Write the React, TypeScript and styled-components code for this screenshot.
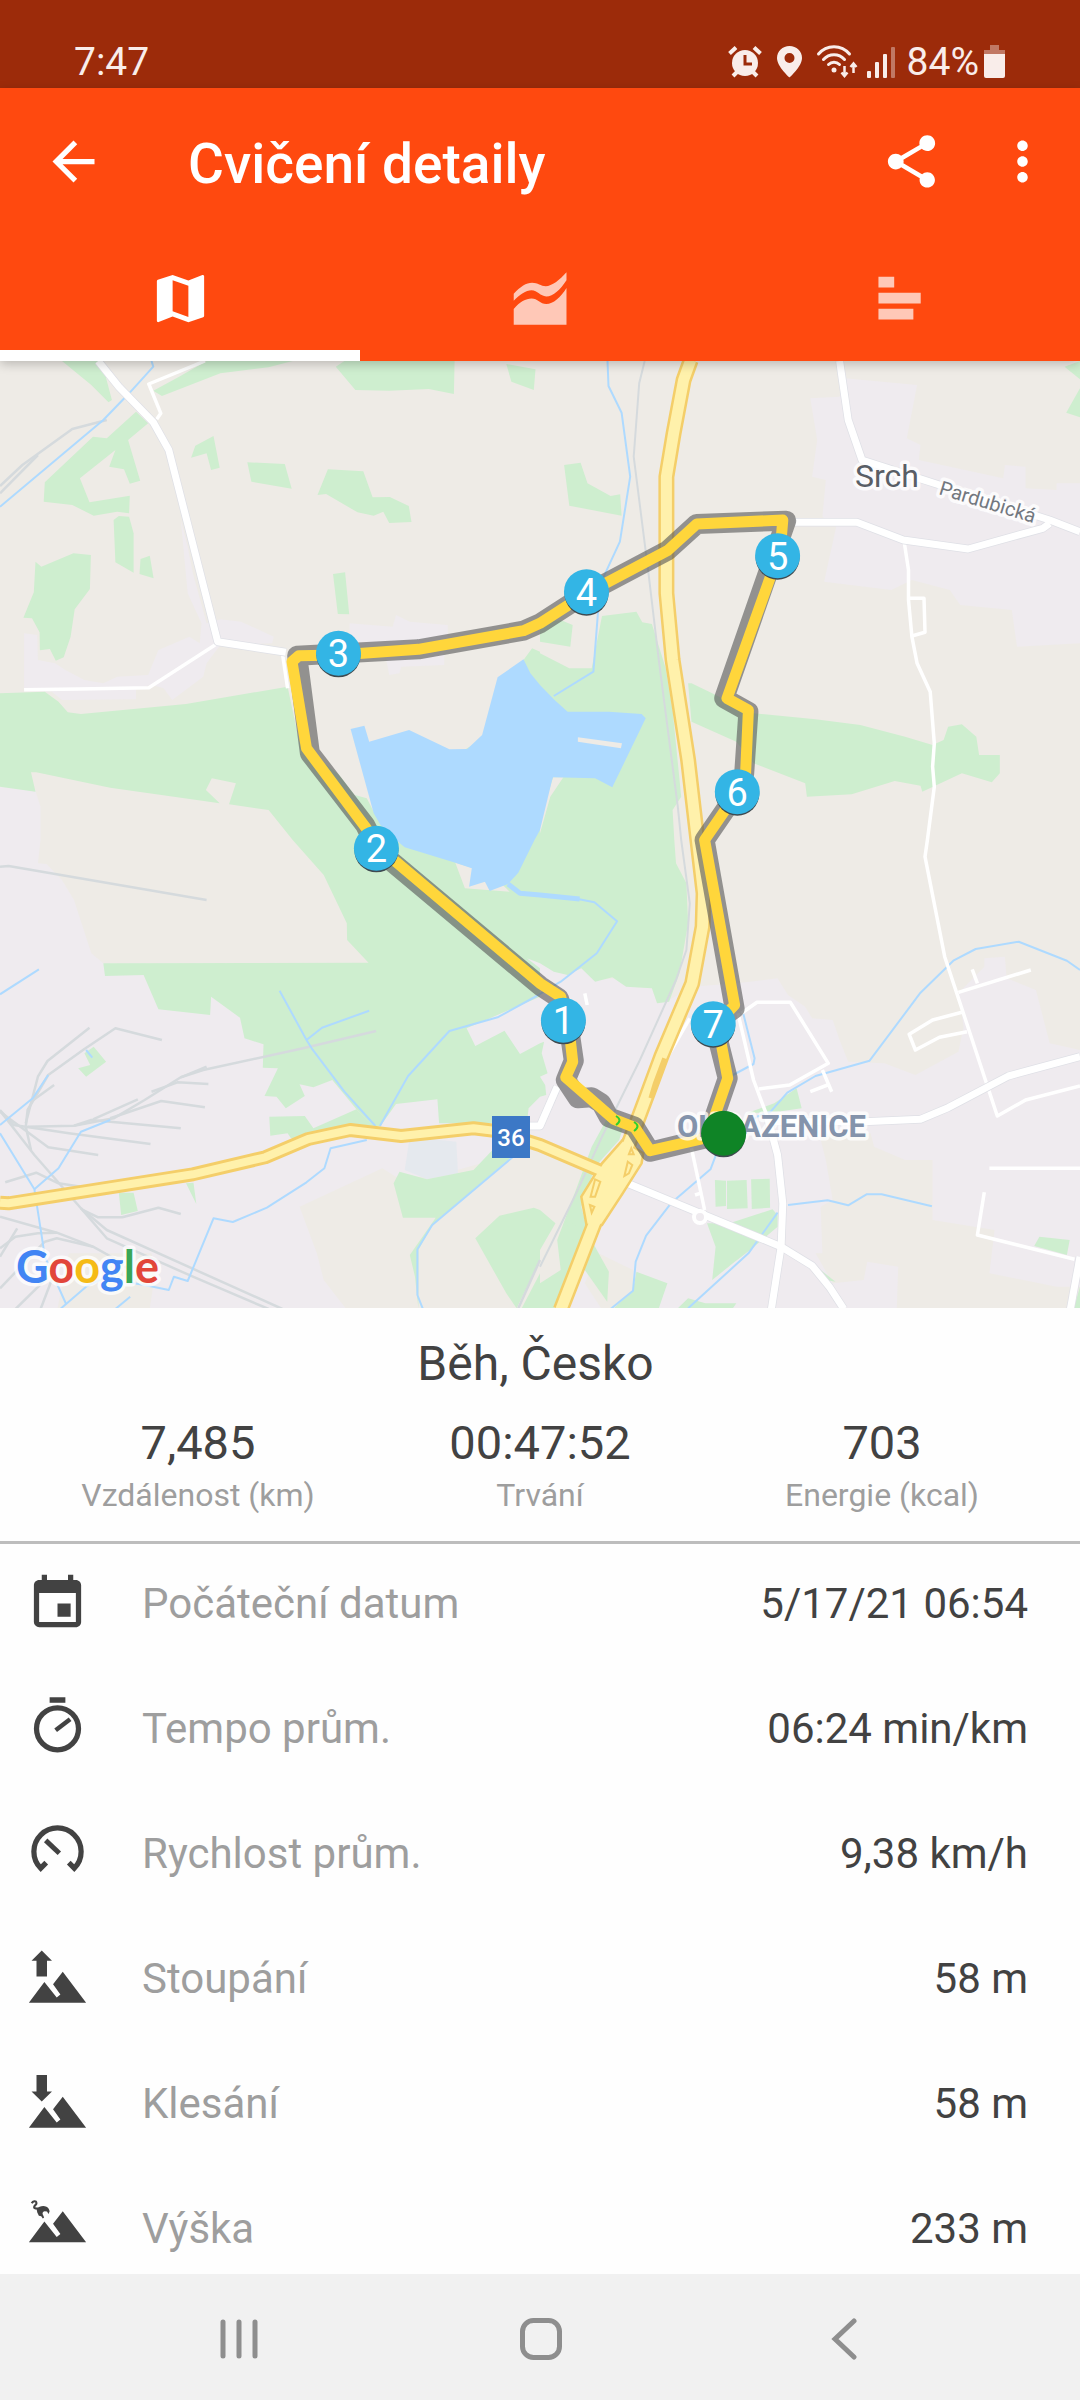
import React from 'react';
import styled, { createGlobalStyle } from 'styled-components';
import { MdArrowBack, MdEvent, MdMap, MdMoreVert, MdShare } from 'react-icons/md';

const GlobalStyle = createGlobalStyle`
  * { box-sizing: border-box; }
  body {
    margin: 0;
    background: #fefefe;
    color: #424242;
    font-family: Roboto, "Noto Sans", sans-serif;
  }
  button {
    margin: 0;
    padding: 0;
    border: 0;
    background: none;
    color: inherit;
    font: inherit;
    cursor: pointer;
  }
  svg { display: block; flex: none; }
`;

/* ---------- layout parts ---------- */

const Screen = styled.div`
  display: flex;
  flex-direction: column;
  height: 100vh;
  overflow: hidden;
`;

const StatusBar = styled.div`
  display: flex;
  flex: none;
  align-items: center;
  justify-content: space-between;
  height: 88px;
  padding: 35px 70px 0 74px;
  background: #9c2b0a;
  color: #f9edea;
  font-size: 39px;
  line-height: 44px;
`;

const StatusIcons = styled.div`
  display: flex;
  align-items: center;
`;

const Header = styled.header`
  position: relative;
  z-index: 1;
  flex: none;
  background: #ff490f;
  color: #fff;
  box-shadow: 0 3px 10px rgba(0, 0, 0, 0.22);
`;

const Toolbar = styled.div`
  display: flex;
  align-items: center;
  height: 147px;
  padding: 0 26px 0 42px;
`;

const Title = styled.h1`
  flex: 1;
  margin: 0 0 0 83px;
  padding-top: 4px;
  font-size: 55px;
  font-weight: 500;
  line-height: 64px;
`;

const ToolbarActions = styled.div`
  display: flex;
  gap: 48px;
`;

const Tabs = styled.nav`
  display: grid;
  grid-template-columns: repeat(3, 1fr);
`;

const Tab = styled.button<{ $active?: boolean }>`
  display: flex;
  align-items: center;
  justify-content: center;
  height: 126px;
  color: ${(p) => (p.$active ? '#fff' : 'rgba(255, 255, 255, 0.7)')};
  box-shadow: ${(p) => (p.$active ? 'inset 0 -11px #fff' : 'none')};
`;

const MapView = styled.svg`
  width: 100%;
  height: auto;
  background: #eeebe6;
`;

const Summary = styled.section`
  flex: none;
  padding: 24px 27px 26px;
  border-bottom: 3px solid #bdbdbd;
`;

const SummaryTitle = styled.h2`
  margin: 0 0 19px;
  padding-right: 9px;
  font-size: 48px;
  font-weight: 400;
  line-height: 64px;
  text-align: center;
`;

const Stats = styled.dl`
  display: grid;
  grid-template-columns: repeat(3, 1fr);
  margin: 0;
  text-align: center;
`;

const Stat = styled.div`
  display: flex;
  flex-direction: column-reverse;
  gap: 4px;
`;

const StatValue = styled.dd`
  margin: 0;
  font-size: 47px;
  line-height: 56px;
`;

const StatLabel = styled.dt`
  color: #9e9e9e;
  font-size: 32px;
  line-height: 40px;
`;

const Details = styled.dl`
  flex: 1;
  min-height: 0;
  margin: 0;
  overflow-y: auto;
  scrollbar-width: none;
`;

const Row = styled.div`
  display: flex;
  align-items: center;
  height: 125px;
  padding: 0 52px 6px 26px;
  font-size: 42px;
  line-height: 50px;
`;

const RowLabel = styled.dt`
  flex: 1;
  margin-left: 53px;
  color: #9e9e9e;
`;

const RowValue = styled.dd`
  margin: 0;
`;

const SystemNav = styled.nav`
  display: flex;
  flex: none;
  justify-content: center;
  height: 126px;
  padding: 4px 0 0 2px;
  background: #f1f1f1;
  color: #8e8e8e;
`;

const NavButton = styled.button`
  display: flex;
  flex: 0 1 302px;
  align-items: center;
  justify-content: center;
`;

/* ---------- icons ---------- */

const AlarmIcon = () => (
  <svg width="48" height="34" fill="none" stroke="currentColor">
    <circle cx="20" cy="18" r="13" fill="currentColor" stroke="none" />
    <path d="M4.500 8.500 11 2.500M29 2.500l6.500 6" strokeWidth="4" />
    <path d="M12 27l-4 4M28 27l4 4" strokeWidth="4" />
    <path d="M20 10v9h7" stroke="#9c2b0a" strokeWidth="3" />
  </svg>
);

const PinIcon = () => (
  <svg width="40" height="34" fill="currentColor">
    <path
      fillRule="evenodd"
      d="M16.500 1C9.500 1 4 6.300 4 13c0 8.500 12.500 19.500 12.500 19.500S29 21.500 29 13C29 6.300 23.500 1 16.500 1zm0 7a5 5 0 1 1 0 10 5 5 0 0 1 0-10z"
    />
  </svg>
);

const WifiIcon = () => (
  <svg width="50" height="34" fill="none" stroke="currentColor" strokeWidth="3" strokeLinecap="round">
    <path d="M5.500 9a20 20 0 0 1 31 0M10.500 14.500a14 14 0 0 1 21 0M15.500 19.500a8 8 0 0 1 11 0" />
    <circle cx="21" cy="25" r="2.500" fill="currentColor" stroke="none" />
    <path d="M31.500 21v9M28.500 27.500l3 3.500 3-3.500M40.500 28v-9M37.500 22l3-3.500 3 3.500" strokeWidth="2.500" strokeLinecap="butt" />
  </svg>
);

const SignalIcon = () => (
  <svg width="44" height="34" fill="currentColor">
    <rect x="4" y="26" width="4" height="7" rx="1" />
    <rect x="12" y="17" width="4" height="16" rx="1" />
    <rect x="20" y="9" width="4" height="24" rx="1" />
    <rect x="28" y="2" width="4" height="31" rx="1" opacity="0.4" />
  </svg>
);

const BatteryIcon = () => (
  <svg width="31" height="34" fill="currentColor">
    <path d="M11 0h9v5h6v4H5V5h6z" opacity="0.4" />
    <path d="M5 9h21v22a2 2 0 0 1-2 2H7a2 2 0 0 1-2-2z" />
  </svg>
);

const Glyph = ({ children }: { children: React.ReactNode }) => (
  <svg width="63" height="63" viewBox="0 0 24 24" fill="currentColor" aria-hidden="true">
    {children}
  </svg>
);

const ChartIcon = () => (
  <Glyph>
    <path d="M1.800 10.200C4.300 7.500 6.600 6 8.800 6c2.200 0 3.300 1.300 5.200 1.300C16.300 7.300 19.300 5 21.900 2v3c-2.300 3.500-5 6.200-7.700 6.200-2.300 0-3.300-2.300-5.600-2.300-2.200 0-4.500 1.600-6.800 4z" />
    <path d="M1.800 16c2.300-2.700 4.600-4 6.800-4 2.300 0 3.300 2.100 5.600 2.100 2.700 0 5.400-2.500 7.700-6.100v14H1.800z" />
  </Glyph>
);

const BarsIcon = () => (
  <Glyph>
    <path d="M3.600 3.700h6v4.100h-6zM3.600 9.800h16.100v4.100H3.600zM3.600 15.900h13.300V20H3.600z" />
  </Glyph>
);

const StopwatchIcon = () => (
  <Glyph>
    <path d="M9 .1h6v2.100H9z" />
    <g fill="none" stroke="currentColor">
      <circle cx="12" cy="12.100" r="8" strokeWidth="2" />
      <path d="M11.300 12.700l5.500-4.200" strokeWidth="1.700" />
    </g>
  </Glyph>
);

const SpeedIcon = () => (
  <Glyph>
    <g fill="none" stroke="currentColor" strokeWidth="2">
      <path d="M7.700 15.500l-2.100 2.100a9 9 0 1 1 12.800 0l-2.100-2.100" />
      <path d="M7.500 7l5.200 4.900" strokeWidth="1.900" />
    </g>
  </Glyph>
);

const MOUNTAINS = 'M14 9.400l8.900 11.800H1.100L7 13.300l4.700 5.900 1.400-1.100-2.800-3.900z';

const AscentIcon = () => (
  <Glyph>
    <path d="M6 1.300l3.900 3.900H8v6H4v-6H2.100z" />
    <path d={MOUNTAINS} />
  </Glyph>
);

const DescentIcon = () => (
  <Glyph>
    <path d="M4 1.100h4v6.300h1.900L6 11.200 2.100 7.400H4z" />
    <path d={MOUNTAINS} />
  </Glyph>
);

const AltitudeIcon = () => (
  <Glyph>
    <path d="M2.200 2.400c.4-.9 1.600-1.100 1.800-.2.200.8-1.100 1-.9 1.800.1.500 1 .3 1.700.4" fill="none" stroke="currentColor" strokeWidth=".8" />
    <path d="M4 4.500c1-1 2.600-1.400 3.800-.8.700.3 1 1 1.200 1.700l-.4 1.100-.6-1-.9-.1c-.8.200-1 .9-.6 1.500l.4.900-.5.400-.6-.9-.9-.2-.6-1.200z" />
    <path d={MOUNTAINS} transform="translate(0 -4)" />
  </Glyph>
);

const RecentsIcon = () => (
  <svg width="42" height="42" stroke="currentColor" strokeWidth="5" strokeLinecap="round">
    <path d="M5 4v34M21 4v34M37 4v34" />
  </svg>
);

const HomeIcon = () => (
  <svg width="42" height="42" fill="none" stroke="currentColor" strokeWidth="5">
    <rect x="2.500" y="2.500" width="37" height="37" rx="11" />
  </svg>
);

const BackIcon = () => (
  <svg width="42" height="42" fill="none" stroke="currentColor" strokeWidth="5" strokeLinecap="round">
    <path d="M32 3 13 21l19 18" />
  </svg>
);

/* ---------- map ---------- */

// Map shapes are kept per quadrant, in fine quadrant units; a quadrant name in a
// point list switches the quadrant for the points after it.
const QUADRANTS: Record<string, [number, number]> = {
  nw: [0, -1],
  ne: [540, -1],
  sw: [0, 479],
  se: [540, 479],
};
const UNIT_X = 540 / 1568;
const UNIT_Y = 1 / 3;

const locate = (quadrant: string, x: number, y: number): [number, number] => {
  const [left, top] = QUADRANTS[quadrant];
  return [Math.round((left + x * UNIT_X) * 10) / 10, Math.round((top + y * UNIT_Y) * 10) / 10];
};

const project = (list: string) => {
  let quadrant = 'nw';
  const out: string[] = [];
  for (const token of list.trim().split(/\s+/)) {
    if (token in QUADRANTS) {
      quadrant = token;
    } else {
      const [x, y] = token.split(',').map(Number);
      out.push(locate(quadrant, x, y).join(','));
    }
  }
  return out.join(' ');
};

const URBAN = [
  'nw 525,480 545,560 560,640 600,790 640,778 700,785 795,830 790,850 640,855 600,910 590,950 500,1020 475,985 440,975 395,985 395,1018 180,1020 150,995 70,990 70,820 108,825 110,900 160,910 190,930 245,960 300,970 340,950 430,945 460,870 550,830 580,850 585,790 545,700',
  'nw 1015,790 1140,800 1150,765 1190,785 1300,795 1300,840 1215,850 1015,860',
  'nw 1120,890 1215,900 1290,880 1290,915 1165,920 1160,940 1130,945',
  'nw 0,1270 102,1290 118,1340 118,1440 sw 110,70 135,72 180,120 215,180 265,340 300,370 1070,370 1568,355 1568,1440 0,1440',
  'se 0,365 120,385 160,420 220,415 260,440 325,445 340,490 375,480 440,440 570,430 690,415 720,465 770,500 790,535 850,540 870,600 895,665 1000,670 1090,705 1215,635 1230,560 1215,460 1290,380 1290,355 1350,350 1355,415 1440,450 1480,610 1568,630 1568,1440 0,1440',
  'ne 785,115 870,110 885,55 1095,75 1065,235 1105,255 1100,300 1345,355 1350,315 1410,320 1410,385 1500,390 1500,370 1568,370 1568,850 1385,860 1370,750 1220,735 1190,690 1080,660 1020,690 825,665 860,500 820,470 830,360 790,350 805,240',
];

const FIELDS = [
  'sw 870,1100 1110,985 1150,1010 1260,1010 1430,960 1568,890 se 0,935 170,995 100,1150 80,1250 0,1440 sw 1030,1440 940,1320 920,1240',
  'sw 200,1240 440,1240 450,1300 430,1440 160,1440',
  'se 810,880 960,880 970,920 1060,960 1140,960 1140,1140 1320,1170 1305,1300 1500,1340 1568,1340 1568,1440 1035,1440 1040,1280 950,1265 940,1320 850,1330 800,1240 820,1240 815,1100 850,1080 830,960',
  'se 170,1240 270,1290 270,1350 200,1440 130,1330',
];

const WOODS = [
  'nw 180,3 295,3 325,120 315,127 265,75',
  'nw 445,92 520,50 600,3 850,3 780,22 640,40 470,108',
  'nw 975,20 1000,3 1320,3 1318,102 1245,87 1130,92 1032,90',
  'nw 1470,12 1555,28 1550,90 1485,65',
  'nw 395,155 430,190 372,240 407,362 377,371 360,328 317,320 335,270 232,355 260,427 377,407 375,460 340,455 272,467 210,435 127,425 130,367 270,230 310,235',
  'nw 345,468 375,470 388,520 388,638 335,607 330,480',
  'nw 408,597 435,587 446,655 405,642',
  'nw 103,605 120,620 213,580 264,585 261,687 217,748 205,830 185,892 162,902 145,867 116,871 115,817 93,775 68,773 98,697',
  'nw 620,228 638,323 613,330 600,280 555,293 567,257',
  'nw 718,307 827,312 847,386 730,365',
  'nw 952,328 1055,334 1082,412 1132,411 1187,438 1195,486 1130,489 1113,455 1085,467 1038,457 947,402 922,405',
  'nw 967,642 1002,637 1014,763 981,762',
  'nw 0,1000 130,995 170,1025 197,1057 235,1062 540,1032 835,980 870,1150 985,1245 1030,1305 1065,1315 1090,1365 1300,1200 1420,1125 1465,950 1520,900 1545,865 1568,875 ne 0,880 85,925 150,925 180,768 280,755 297,787 325,792 365,925 385,1050 410,1310 385,1350 390,1440 se 395,70 425,130 430,250 405,400 375,485 340,490 325,445 250,440 210,412 160,425 120,385 80,405 40,395 0,370 sw 1530,355 1568,385 1568,470 1355,565 1380,618 1465,572 1510,642 1568,610 se 12,605 5,640 22,700 0,710 15,735 18,765 sw 1568,770 1535,805 1530,850 1430,850 1275,850 1270,778 1150,792 1105,858 1085,858 1035,808 965,720 910,742 870,733 885,768 830,805 803,770 768,768 807,685 763,683 765,613 710,595 697,533 613,470 610,525 460,508 417,405 305,408 300,370 1070,368 1008,300 1007,250 940,105 850,0 nw 780,1350 665,1333 685,1270 615,1255 598,1290 638,1330 320,1283 105,1237 90,1237 103,1295 0,1280',
  'sw 1035,808 1085,858 1010,860 900,895 845,895 835,880 785,887 782,830 885,828 910,865',
  'ne 70,315 118,308 138,370 205,408 233,403 237,467 85,437',
  'ne 0,790 60,780 95,795 88,860 0,845',
  'ne 1523,20 1568,3 1568,58',
  'ne 1568,85 1568,172 1528,158',
  'ne 430,970 440,970 620,1060 800,1078 930,1095 1060,1130 1140,1155 1172,1140 1185,1100 1225,1093 1267,1130 1275,1185 1335,1185 1335,1240 1312,1267 1225,1240 1110,1295 1105,1277 1030,1263 905,1303 775,1310 770,1270 620,1210 570,1145 440,1085',
  'se 150,920 195,835 245,850 230,900 160,980 120,1100 135,1160 75,1310 40,1405 0,1405 0,1330 60,1290 50,1200 90,1090',
  'se 75,1145 130,1165 200,1295 195,1385 130,1290',
  'se 280,1295 370,1330 345,1405 215,1405 270,1350',
  'se 508,1020 540,1022 540,1098 510,1100',
  'se 543,1022 600,1020 603,1105 543,1107',
  'se 613,1018 667,1016 668,1103 615,1107',
  'se 485,1150 550,1150 675,1108 690,1125 690,1160 610,1230 560,1270 500,1320 510,1220',
  'se 745,745 760,805 690,815 600,820 680,790',
  'se 1450,1190 1538,1200 1530,1245 1435,1218',
  'se 430,1375 480,1390 570,1390 560,1405 400,1405',
  'se 1568,1340 1568,1405 1550,1405',
  'se 815,1290 858,1325 830,1320',
  'sw 245,640 272,620 308,665 250,710 227,685 262,675',
  'sw 345,1058 388,1058 400,1113 352,1125',
  'sw 540,1030 562,1028 570,1092',
  'sw 1160,995 1240,1018 1375,990 1430,930 1485,950 1255,1155 1215,1230 1215,1405 1205,1310 1190,1245 1265,1133 1170,1133 1143,1030',
  'sw 1450,1127 1550,1103 1568,1110 se 45,1150 0,1230 sw 1568,1260 1500,1405 1470,1360 1380,1195',
  'sw 1568,1300 1568,1405 1515,1405',
];

const CLEARINGS = [
  'sw 1322,68 1375,85 1370,130 1410,125 1425,145 1460,135 1480,155 1350,145',
  'ne 38,1252 68,1252 30,1310 0,1420 0,1380',
];

const LAKE =
  'nw 1018,1107 1058,1097 1072,1145 1188,1110 1305,1168 1357,1167 1400,1125 1445,952 1520,898 1540,940 1568,975 ne 40,1018 80,1055 200,1055 295,1062 307,1075 210,1282 160,1255 38,1252 35,1260 0,1410 sw 1552,0 1505,98 1475,132 1460,138 1422,153 1408,125 1362,140 1370,85 1322,68 1175,22 1150,0 nw 1105,1395 1085,1360';
const ISLAND = 'ne 110,1132 238,1150 235,1165 110,1145';

const STREAMS = [
  'nw 440,3 445,20 375,100 300,180 0,440',
  'ne 196,3 199,78 237,158 262,350 232,545 185,650 168,760 155,935 40,1008',
  'se 0,167 110,177 158,187 224,244 165,340 60,425 40,437 sw 1558,468 1445,532 1305,573 1185,708 1103,858',
  'sw 812,452 890,600 905,625 1000,755 1090,858',
  'sw 890,600 935,563 1072,512',
  'sw 1065,900 960,925 942,985 890,1027 775,1103 676,1146 620,1135 545,1323 505,1310 490,1350 420,1335 300,1315 250,1340 175,1407',
  'sw 113,388 0,463',
  'sw 0,855 95,775 140,705',
  'sw 320,840 235,875 170,985 100,1048',
  'sw 0,880 100,1048 120,1180 130,1250 192,1392',
  'sw 378,1370 335,1407',
  'sw 250,630 268,653',
  'sw 1490,950 1255,1155 1212,1228 1212,1365 1228,1407',
  'se 590,520 623,655 620,672 560,705',
  'se 1568,390 1530,362 1390,305 1265,327 1200,362 1105,458 957,662 800,708 718,758 670,815 630,830 520,920 495,988 380,1090 308,1187 278,1265 270,1352 205,1407',
  'se 720,1095 835,1081 895,1096 948,1063 992,1063 1138,1099',
  'se 690,1118 605,1240 430,1405',
];

const RAILS = [
  'nw 310,180 210,207 65,315 0,378',
  'nw 110,285 0,400',
  'sw 0,80 25,78 600,180',
  'sw 260,563 138,663 110,710 75,850',
  'sw 470,600 335,565 245,627 140,705 80,810 75,860 90,930',
  'sw 157,735 90,785',
  'sw 1092,573 880,625 590,690 525,712 420,780 330,835 215,857 80,860',
  'sw 600,680 525,712',
  'sw 605,732 515,727 440,755',
  'sw 595,802 468,783 320,835',
  'sw 400,778 270,838',
  'sw 525,865 265,840 215,857',
  'sw 437,912 200,880 40,855 0,810',
  'sw 285,945 140,922 0,815',
  'sw 0,812 100,945 235,1105 310,1170 820,1407',
  'sw 235,1105 310,1195 560,1310 780,1407',
  'sw 15,1027 105,998 170,1030 235,1040',
  'sw 240,1110 285,1132 355,1132 460,1103 525,1122',
  'sw 0,1130 165,1178 270,1220 340,1260 400,1310',
  'sw 0,1225 45,1190 110,1180 165,1178',
  'sw 0,1250 50,1165',
  'sw 0,1345 130,1205 165,1195 270,1220',
  'sw 45,1407 160,1290',
  'sw 118,1407 150,1320',
  'sw 1505,1405 1568,1260',
];

const MAIN_RAIL =
  'ne 304,3 288,70 272,290 315,640 345,900 400,1340 410,1440 se 435,190 425,330 395,420 290,660 180,890 105,1060 0,1280';

const LANES = [
  'nw 595,3 432,72 467,160 455,178',
  'nw 70,989 230,987 432,983 632,850',
  'nw 820,880 835,985',
  'ne 1058,550 1070,630 1070,720 1080,830 1095,910 1133,995 1145,1150 1140,1220 1145,1280 1125,1440 se 1118,50 1175,350 1328,828 1410,780 1568,738',
  'ne 1070,715 1115,715 1118,817 1080,828',
  'se 1215,457 1425,390',
  'se 1255,388 1270,430',
  'se 1225,517 1140,540 1072,583 1090,630 1160,592 1240,575',
  'se 585,520 630,487 727,487 837,670 725,735 635,747',
  'se 575,520 620,720 660,830',
  'se 820,690 847,755',
  'se 835,735 785,755',
  'se 440,925 478,1110',
  'se 450,1065 465,1060',
  'se 435,535 365,660',
  'se 130,460 137,495',
  'se 1305,985 1568,985',
  'se 1290,1057 1270,1185 1552,1258',
];

const ROADS = [
  'nw 285,3 345,80 445,187 490,270 632,845 830,877',
  'ne 870,3 895,180 935,300 1100,355 1160,375 1480,480 1568,515',
  'ne 740,487 920,487 1055,540 1243,567 1460,505 1480,490',
  'sw 1530,858 1568,858 se 50,740',
  'se 680,845 940,845 1105,838 1185,803 1360,708 1568,650',
  'se 660,830 690,945 705,1090 700,1220 672,1407',
  'se 250,1028 465,1120 700,1220 790,1277 840,1340 882,1407',
  'se 1568,1250 1540,1407',
];

const ROUTE_36 =
  'sw 0,1088 25,1090 560,1003 770,952 895,897 1017,870 1165,888 1375,865 1440,873 1568,915 se 170,990 240,1020';
const MOTORWAY =
  'ne 438,0 417,60 388,220 367,350 367,700 385,900 430,1200 457,1440 se 475,160 472,260 442,430 352,650 309,770 262,900 200,1060 158,1150 60,1410';
const INTERCHANGE = 'se 240,900 300,940 295,970 240,1060 180,1155 135,1155 120,1070 180,970';
const ISLETS = [
  'se 265,925 272,943 258,943',
  'se 255,965 268,975 258,1000 245,1008',
  'se 160,1018 175,1025 160,1070 147,1070',
  'se 145,1095 158,1100 150,1118',
];

const TRACK_SHADOW =
  'se 533,882 320,935 275,860 200,832 178,790 150,772 110,775 75,720 98,662 88,590 55,475 sw 1568,437 1097,30 nw 1060,1395 900,1180 863,887 1215,868 1520,812 ne 0,790 135,700 370,572 455,492 715,482 535,1015 605,1055 593,1240 573,1297 478,1440 se 565,505 505,550 545,715 500,850';
const TRACK =
  'se 533,882 320,932 275,862 215,838 75,712 95,665 88,600 60,470 sw 1568,430 1103,25 nw 1060,1400 890,1165 848,905 868,887 983,885 1215,868 1520,812 ne 0,790 135,700 370,572 455,492 705,480 700,540 690,590 543,1015 605,1050 597,1240 573,1297 478,1440 se 565,495 515,550 545,715 500,850';

const MARKERS: { label: string; at: [string, number, number] }[] = [
  { label: '1', at: ['se', 68, 541] },
  { label: '2', at: ['sw', 1093, 25] },
  { label: '3', at: ['nw', 983, 880] },
  { label: '4', at: ['ne', 135, 695] },
  { label: '5', at: ['ne', 690, 587] },
  { label: '6', at: ['ne', 573, 1295] },
  { label: '7', at: ['se', 503, 551] },
];

const Areas = ({ shapes, fill }: { shapes: string[]; fill: string }) => (
  <g fill={fill}>
    {shapes.map((s) => (
      <polygon key={s} points={project(s)} />
    ))}
  </g>
);

const Lines = ({ shapes, color, width }: { shapes: string[]; color: string; width: number }) => (
  <g fill="none" stroke={color} strokeWidth={width} strokeLinejoin="round">
    {shapes.map((s) => (
      <polyline key={s} points={project(s)} />
    ))}
  </g>
);

const Pin = ({ at, fill, label }: { at: [string, number, number]; fill: string; label?: string }) => {
  const [x, y] = locate(...at);
  return (
    <g>
      <circle cx={x} cy={y + 2} r="22" fill="#3f4a50" />
      <circle cx={x} cy={y} r="22.500" fill={fill} />
      {label && (
        <text x={x} y={y + 14} fontSize="38" fill="#fff" textAnchor="middle">
          {label}
        </text>
      )}
    </g>
  );
};

const MapLabel = styled.text`
  paint-order: stroke;
  stroke: rgba(255, 255, 255, 0.75);
  stroke-width: 7px;
  stroke-linejoin: round;
`;

const Logo = styled(MapLabel)`
  font-family: Lato, Roboto, sans-serif;
  font-size: 45px;
  font-weight: 700;
`;

const RouteMap = () => (
  <MapView viewBox="0 0 1080 947" role="img" aria-label="Mapa trasy">
    <Areas shapes={URBAN} fill="#efebef" />
    <Areas shapes={FIELDS} fill="#eeebe6" />
    <Areas shapes={['sw 1190,890 1325,905 1330,1000 1240,1018 1175,990']} fill="#e5e9ee" />
    <Areas shapes={WOODS} fill="#ceeecf" />
    <Areas shapes={CLEARINGS} fill="#eeebe6" />
    <Areas shapes={[LAKE]} fill="#aedaff" />
    <Areas shapes={[ISLAND]} fill="#eeebe6" />
    <Lines shapes={RAILS} color="#d5dadd" width={2.5} />
    <Lines shapes={[MAIN_RAIL]} color="#d5dadd" width={2} />
    <Lines shapes={STREAMS} color="#aedaff" width={2} />
    <Lines shapes={['sw 1475,132 1510,160 1568,165 se 0,165 115,177']} color="#aedaff" width={5} />
    <Lines shapes={LANES} color="#fff" width={3.5} />
    <Lines shapes={ROADS} color="#dfe0e6" width={8.5} />
    <Lines shapes={ROADS} color="#fff" width={7} />
    <circle cx="700" cy="856" r="6" fill="#efebef" stroke="#fff" strokeWidth="4" />
    <Lines shapes={[ROUTE_36]} color="#f4ce69" width={14} />
    <Lines shapes={[MOTORWAY]} color="#f4ce69" width={16} />
    <polygon points={project(INTERCHANGE)} fill="#fff1ab" stroke="#f4ce69" strokeWidth="2.500" />
    <Lines shapes={[ROUTE_36]} color="#fff1ab" width={8} />
    <Lines shapes={[MOTORWAY]} color="#fff1ab" width={11} />
    <Lines shapes={['se 362,655 335,730 322,775']} color="#f4ce69" width={5} />
    <g fill="#fff1ab" stroke="#f4ce69" strokeWidth="2">
      {ISLETS.map((s) => (
        <polygon key={s} points={project(s)} />
      ))}
    </g>

    <rect x="492" y="755" width="38" height="42" fill="#3c78c6" />
    <text x="511" y="785" fontSize="24" fontWeight="500" fill="#fff" textAnchor="middle">
      36
    </text>

    <g opacity="0.6">
      <Lines shapes={[TRACK_SHADOW]} color="#555" width={20} />
    </g>
    <Lines shapes={[TRACK]} color="#ffd63b" width={11} />
    <g fill="none" stroke="#2fd02f" strokeWidth="2">
      <path d="M616 755q7 4 0 9M634 761q7 4 0 9" />
    </g>

    <MapLabel x="855" y="126" fontSize="32" fill="#595e66">
      Srch
    </MapLabel>
    <MapLabel transform="translate(938 133) rotate(17)" fontSize="20" fill="#73787f">
      Pardubická
    </MapLabel>
    <MapLabel x="677" y="776" fontSize="31" fontWeight="700" fill="#8493ab">
      OHRAZENICE
    </MapLabel>

    {MARKERS.map((m) => (
      <Pin key={m.label} at={m.at} fill="#33b5e5" label={m.label} />
    ))}
    <Pin at={['se', 533, 880]} fill="#0f8426" />

    <Logo x="16" y="922">
      <tspan fill="#4285f4">G</tspan>
      <tspan fill="#e2463a">o</tspan>
      <tspan fill="#f5bb16">o</tspan>
      <tspan fill="#4285f4">g</tspan>
      <tspan fill="#3aa757">l</tspan>
      <tspan fill="#e2463a">e</tspan>
    </Logo>
  </MapView>
);

/* ---------- data ---------- */

const STATS = [
  { label: 'Vzdálenost (km)', value: '7,485' },
  { label: 'Trvání', value: '00:47:52' },
  { label: 'Energie (kcal)', value: '703' },
];

const DETAILS = [
  { icon: <MdEvent size={63} />, label: 'Počáteční datum', value: '5/17/21 06:54' },
  { icon: <StopwatchIcon />, label: 'Tempo prům.', value: '06:24 min/km' },
  { icon: <SpeedIcon />, label: 'Rychlost prům.', value: '9,38 km/h' },
  { icon: <AscentIcon />, label: 'Stoupání', value: '58 m' },
  { icon: <DescentIcon />, label: 'Klesání', value: '58 m' },
  { icon: <AltitudeIcon />, label: 'Výška', value: '233 m' },
];

export default function App() {
  return (
    <Screen>
      <GlobalStyle />
      <StatusBar>
        <span>7:47</span>
        <StatusIcons>
          <AlarmIcon />
          <PinIcon />
          <WifiIcon />
          <SignalIcon />
          <span>84%</span>
          <BatteryIcon />
        </StatusIcons>
      </StatusBar>

      <Header>
        <Toolbar>
          <button type="button" aria-label="Zpět">
            <MdArrowBack size={63} />
          </button>
          <Title>Cvičení detaily</Title>
          <ToolbarActions>
            <button type="button" aria-label="Sdílet">
              <MdShare size={63} />
            </button>
            <button type="button" aria-label="Další možnosti">
              <MdMoreVert size={63} />
            </button>
          </ToolbarActions>
        </Toolbar>
        <Tabs>
          <Tab type="button" $active aria-label="Mapa">
            <MdMap size={63} />
          </Tab>
          <Tab type="button" aria-label="Graf">
            <ChartIcon />
          </Tab>
          <Tab type="button" aria-label="Úseky">
            <BarsIcon />
          </Tab>
        </Tabs>
      </Header>

      <RouteMap />

      <Summary>
        <SummaryTitle>Běh, Česko</SummaryTitle>
        <Stats>
          {STATS.map((s) => (
            <Stat key={s.label}>
              <StatLabel>{s.label}</StatLabel>
              <StatValue>{s.value}</StatValue>
            </Stat>
          ))}
        </Stats>
      </Summary>

      <Details>
        {DETAILS.map((d) => (
          <Row key={d.label}>
            {d.icon}
            <RowLabel>{d.label}</RowLabel>
            <RowValue>{d.value}</RowValue>
          </Row>
        ))}
      </Details>

      <SystemNav>
        <NavButton type="button" aria-label="Poslední aplikace">
          <RecentsIcon />
        </NavButton>
        <NavButton type="button" aria-label="Domů">
          <HomeIcon />
        </NavButton>
        <NavButton type="button" aria-label="Zpět">
          <BackIcon />
        </NavButton>
      </SystemNav>
    </Screen>
  );
}
